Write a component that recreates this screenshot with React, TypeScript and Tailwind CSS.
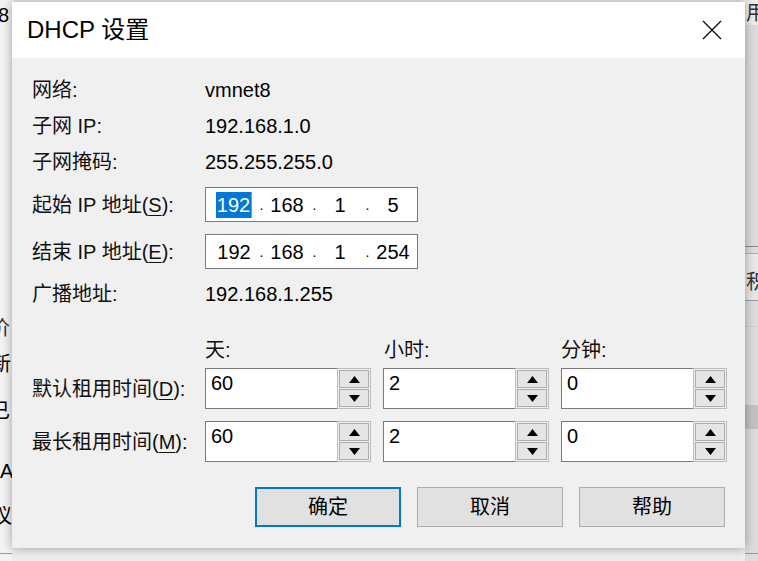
const FONT = "font-['Liberation_Sans','Noto_Sans_CJK_SC',sans-serif]";

function Triangle({ up }: { up?: boolean }) {
  return (
    <svg width="11" height="7" viewBox="0 0 11 7" className="block">
      {up ? <polygon points="5.5,0 11,7 0,7" fill="#000" /> : <polygon points="0,0 11,0 5.5,7" fill="#000" />}
    </svg>
  );
}

function SpinBox({ value }: { value: string }) {
  return (
    <div className="flex h-[41px] w-[166px] shrink-0">
      <div className="flex-1 border border-r-0 border-[#7a7a7a] bg-white pl-[5px] pt-[1px] text-[20px] leading-[26px] text-black">
        {value}
      </div>
      <div className="flex w-[34px] flex-col gap-px border border-[#bcbcbc] bg-[#f0f0f0] p-px">
        <div className="flex flex-1 items-center justify-center border border-[#adadad] bg-[#e5e5e5]">
          <Triangle up />
        </div>
        <div className="flex flex-1 items-center justify-center border border-[#adadad] bg-[#e5e5e5]">
          <Triangle />
        </div>
      </div>
    </div>
  );
}

function IpField({ parts, selectFirst }: { parts: string[]; selectFirst?: boolean }) {
  return (
    <div className="flex h-[35px] w-[213px] shrink-0 items-center border border-[#7a7a7a] bg-white pl-[5px] text-[20px] leading-[26px] text-black">
      {parts.map((p, i) => (
        <div key={i} className="flex items-center">
          {i > 0 && <span className="w-[7px] pl-[2px] text-center text-[14px]">.</span>}
          <span className="flex w-[46px] justify-center">
            {i === 0 && selectFirst ? (
              <span className="border-r border-[#e08a2c] bg-[#0078d7] px-px text-white">{p}</span>
            ) : (
              <span>{p}</span>
            )}
          </span>
        </div>
      ))}
    </div>
  );
}

function Mn({ children }: { children: string }) {
  return <span className="underline underline-offset-[3px] decoration-1">{children}</span>;
}

function Button({ label, primary }: { label: string; primary?: boolean }) {
  return (
    <div
      className={
        'flex h-[40px] w-[146px] items-center justify-center bg-[#e1e1e1] text-[20px] text-black ' +
        (primary ? 'border-2 border-[#0078d7]' : 'border border-[#adadad]')
      }
    >
      {label}
    </div>
  );
}

export default function App() {
  const infoRows = [
    ['网络:', 'vmnet8'],
    ['子网 IP:', '192.168.1.0'],
    ['子网掩码:', '255.255.255.0'],
  ];

  return (
    <div className={`relative h-[561px] w-[758px] overflow-hidden bg-[#ededed] ${FONT}`}>
      {/* window behind the dialog */}
      <div className="absolute left-0 top-0 h-[561px] w-[12px] overflow-hidden bg-[#f3f3f3] text-[20px] leading-[24px] text-black">
        <span className="absolute left-[-2px] top-[3px]">8</span>
        <span className="absolute left-[-10px] top-[316px] text-[#333]">价</span>
        <span className="absolute left-[-9px] top-[352px]">新</span>
        <span className="absolute left-[-10px] top-[399px]">已</span>
        <span className="absolute left-[0px] top-[459px]">A</span>
        <span className="absolute left-[-8px] top-[504px]">议</span>
        <div className="absolute left-0 top-[553px] h-px w-[12px] bg-[#9a9a9a]" />
      </div>
      <div className="absolute left-[745px] top-0 h-[561px] w-[13px] overflow-hidden bg-[#dcdcdc]">
        <div className="absolute left-0 top-0 h-[25px] w-[13px] bg-[#ececec]" />
        <span className="absolute left-[1px] top-[1px] text-[20px] leading-[24px] text-[#333]">用</span>
        <div className="absolute left-0 top-[246px] h-px w-[13px] bg-[#8a8a8a]" />
        <div className="absolute left-0 top-[253px] h-px w-[13px] bg-[#b0b0b0]" />
        <div className="absolute left-0 top-[254px] h-[46px] w-[13px] bg-[#e8e8e8]" />
        <span className="absolute left-[1px] top-[270px] text-[20px] leading-[24px] text-[#333]">积</span>
        <div className="absolute left-0 top-[300px] h-px w-[13px] bg-[#9a9a9a]" />
        <div className="absolute left-0 top-[326px] h-px w-[13px] bg-[#cfcfcf]" />
        <div className="absolute left-0 top-[405px] h-[24px] w-[13px] bg-[#c2c2c2]" />
        <div className="absolute left-0 top-[553px] h-px w-[13px] bg-[#9a9a9a]" />
      </div>

      {/* dialog window */}
      <div className="absolute left-[12px] top-[2px] flex h-[546px] w-[733px] flex-col bg-[#f0f0f0] shadow-[0_0_10px_rgba(0,0,0,0.35)]">
        <div className="flex h-[56px] items-center justify-between bg-white pl-[15px] pr-[23px]">
          <span className="text-[24px] leading-[28px] text-black">DHCP 设置</span>
          <svg width="20" height="20" viewBox="0 0 20 20">
            <path d="M1 1 L19 19 M19 1 L1 19" stroke="#111" strokeWidth="1.4" fill="none" />
          </svg>
        </div>

        <div className="flex flex-1 flex-col pl-[20px] pr-[18px] pt-[14px] text-[20px] leading-[24px] text-black">
          {infoRows.map(([label, value]) => (
            <div key={label} className="flex h-[36px] items-center">
              <span className="w-[173px] shrink-0 text-[#111]">{label}</span>
              <span>{value}</span>
            </div>
          ))}

          <div className="mt-[7px] flex items-center">
            <span className="w-[173px] shrink-0 text-[#111]">
              起始 IP 地址(<Mn>S</Mn>):
            </span>
            <IpField parts={['192', '168', '1', '5']} selectFirst />
          </div>
          <div className="mt-[12px] flex items-center">
            <span className="w-[173px] shrink-0 text-[#111]">
              结束 IP 地址(<Mn>E</Mn>):
            </span>
            <IpField parts={['192', '168', '1', '254']} />
          </div>

          <div className="mt-[7px] flex h-[36px] items-center">
            <span className="w-[173px] shrink-0 text-[#111]">广播地址:</span>
            <span>192.168.1.255</span>
          </div>

          <div className="mt-[26px] flex h-[24px] items-center gap-[12px] pl-[173px] text-[#111]">
            <span className="w-[166px] shrink-0">天:</span>
            <span className="w-[165px] shrink-0 pl-px">小时:</span>
            <span className="w-[166px] shrink-0 pl-px">分钟:</span>
          </div>

          <div className="mt-[6px] flex items-center">
            <span className="w-[173px] shrink-0 text-[#111]">
              默认租用时间(<Mn>D</Mn>):
            </span>
            <div className="flex gap-[12px]">
              <SpinBox value="60" />
              <SpinBox value="2" />
              <SpinBox value="0" />
            </div>
          </div>
          <div className="mt-[12px] flex items-center">
            <span className="w-[173px] shrink-0 text-[#111]">
              最长租用时间(<Mn>M</Mn>):
            </span>
            <div className="flex gap-[12px]">
              <SpinBox value="60" />
              <SpinBox value="2" />
              <SpinBox value="0" />
            </div>
          </div>

          <div className="mr-[2px] mt-[25px] flex justify-end gap-[16px]">
            <Button label="确定" primary />
            <Button label="取消" />
            <Button label="帮助" />
          </div>
        </div>
      </div>
    </div>
  );
}
